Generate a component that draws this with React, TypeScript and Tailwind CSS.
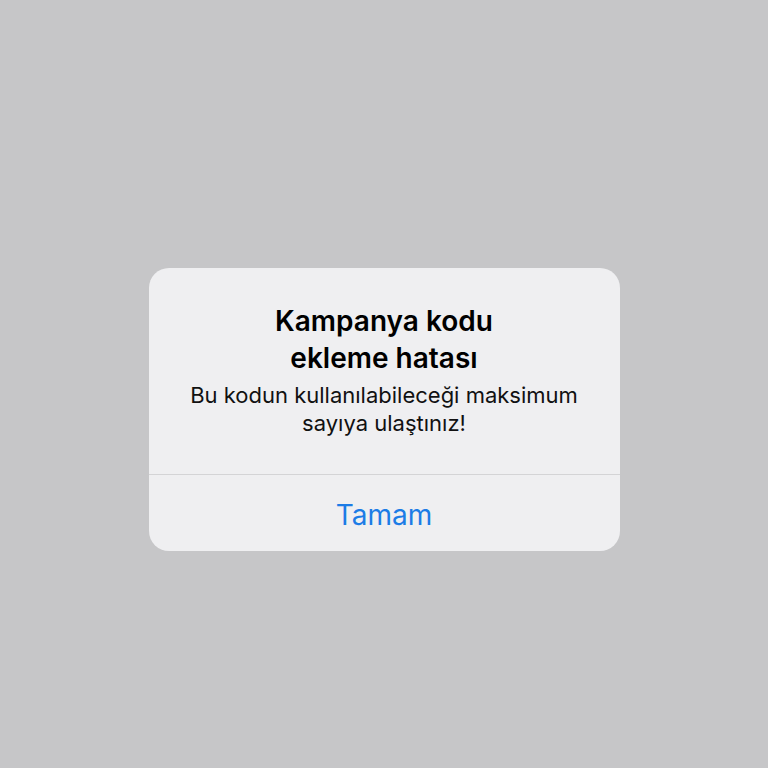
import React from 'react';

const App: React.FC = () => {
  return (
    <div
      className="w-full h-screen bg-[#c6c6c8] flex justify-center pt-[268px]"
      style={{ fontFamily: 'Inter, "Noto Sans", sans-serif' }}
    >
      <div className="w-[471px] h-[283px] rounded-[20px] bg-[#efeff1] flex flex-col">
        <div className="flex-1 flex flex-col items-center pt-[35px] px-6 text-center">
          <h1 className="text-[28px] leading-[37px] font-semibold text-black">
            Kampanya kodu
            <br />
            ekleme hatası
          </h1>
          <p className="mt-[4px] text-[22px] leading-[28px] text-[#111]">
            Bu kodun kullanılabileceği maksimum
            <br />
            sayıya ulaştınız!
          </p>
        </div>
        <div className="h-px bg-[#d4d4d6]" />
        <button className="h-[76px] pt-[4px] flex items-center justify-center text-[28px] text-[#1c7ce6]">
          Tamam
        </button>
      </div>
    </div>
  );
};

export default App;
